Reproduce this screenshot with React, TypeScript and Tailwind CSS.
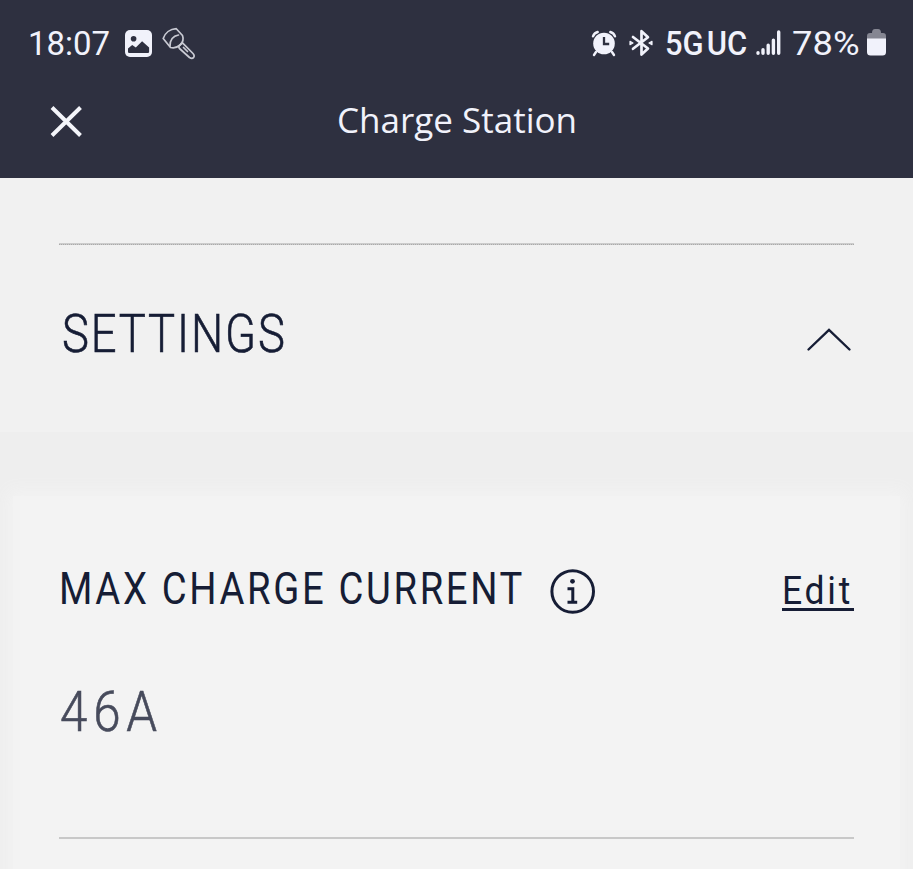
const sans = "font-['Roboto','Liberation_Sans',sans-serif]";

function StatusBar() {
  return (
    <div className={`flex h-[86px] items-start pl-[28px] pt-[26px] text-[#f1f2fb] ${sans}`}>
      <div className="w-[97px] whitespace-nowrap text-[34px] leading-[34px]">
        <span className="inline-block origin-left scale-x-[0.97]">18:07</span>
      </div>
      <svg width="27" height="27" viewBox="0 0 27 27" className="mt-[4px]">
        <rect width="27" height="27" rx="5" fill="#f1f2fb" />
        <circle cx="8.6" cy="8.7" r="2.8" fill="#2e3040" />
        <path d="M3 22v-3.4l4.2-3.7 3.6 2.7 6.3-6.3 7 6.2V22q0 1-1.2 1H4.2Q3 23 3 22Z" fill="#2e3040" />
      </svg>
      <svg width="34" height="34" viewBox="0 0 34 34" className="ml-[10px] mt-[1px]" fill="none" stroke="#c9cad3" strokeWidth="1.7" strokeLinejoin="round" strokeLinecap="round">
        <path d="M1.200 11.500C3 6 8 2 14.300 1.700L20.500 8.500Q22.500 14 18 18T8.500 20.500Z" />
        <path d="M8 19C8 13 11 9 16.500 8" />
        <path d="M17.500 18.500 20.500 15.800 31 26.500Q33 29 31.500 30.600T27.500 30.500L17.500 21.500Q16.200 19.800 17.500 18.500Z" />
        <path d="M21.500 20.500l4 4" />
      </svg>
      <div className="ml-[395px] flex">
        <svg width="26" height="27" viewBox="0 0 26 27" className="mt-[4px]">
          <circle cx="13" cy="13.5" r="10.800" fill="#f1f2fb" />
          <path d="M2 6.3Q3.2 3 6.7 2M24 6.3Q22.8 3 19.3 2M5 22l-2 3M21 22l2 3" stroke="#f1f2fb" strokeWidth="2.4" strokeLinecap="round" fill="none" />
          <path d="M13 7v7h5.2" stroke="#2e3040" strokeWidth="2.3" fill="none" />
        </svg>
        <svg width="24" height="28" viewBox="0 0 24 28" className="ml-[12px] mt-[3px]" fill="none" stroke="#f1f2fb" strokeWidth="2.7" strokeLinecap="round" strokeLinejoin="round">
          <path d="M4 8 19 19.500l-6.500 6V2.200L19 8.200 4 19.800" />
          <path d="M1 12.400 4 14l-3 1.600zM23 12.400 20 14l3 1.600z" fill="#f1f2fb" strokeWidth="1.200" />
        </svg>
        <div className="ml-[12px] w-[91px] whitespace-nowrap text-[34px] font-medium leading-[34px]">
          <span className="inline-block origin-left scale-x-[0.91] [word-spacing:-5px]">5G UC</span>
        </div>
        <svg width="25" height="26" viewBox="0 0 25 26" className="mt-[4px]" fill="none" stroke="#f1f2fb" strokeWidth="3.400" strokeLinecap="round">
          <path d="M2 23.300v-.6M7 23.300v-3.500M12.200 23.300v-8M17.400 23.300v-13M22.700 23.300V2" />
        </svg>
        <div className="ml-[11px] w-[75px] whitespace-nowrap text-[34px] leading-[34px]">
          <span className="inline-block origin-left scale-x-[1.07]">78%</span>
        </div>
        <svg width="19" height="27" viewBox="0 0 19 27" className="mt-[3px]">
          <path d="M0 10V7q0-3 3-3h2q0-4 3-4h3q3 0 3 4h2q3 0 3 3v3Z" fill="#858692" />
          <path d="M0 9.500h19V23q0 3.500-3.500 3.500h-12Q0 26.500 0 23Z" fill="#f1f2fb" />
        </svg>
      </div>
    </div>
  );
}

function TitleBar() {
  return (
    <div className="flex h-[92px] items-start pl-[50px] text-[#f1f2fb]">
      <svg width="33" height="33" viewBox="0 0 33 33" className="mt-[19px]" stroke="#f4f5fa" strokeWidth="4">
        <path d="m2 2.500 28.500 28M30.500 2.500 2 30.500" />
      </svg>
      <h1 className="ml-[254px] mt-[16px] w-[245px] whitespace-nowrap font-['Open_Sans',sans-serif] text-[34px] font-normal leading-[36px]">
        <span className="inline-block origin-left scale-x-[1.03]">Charge Station</span>
      </h1>
    </div>
  );
}

export default function App() {
  return (
    <div className={`h-[869px] w-full overflow-hidden bg-[#f1f1f1] text-[#161d35] ${sans}`}>
      <header className="h-[178px] bg-[#2e3040]">
        <StatusBar />
        <TitleBar />
      </header>
      <section className="h-[254px] px-[59px] pt-[65px]">
        <div className="h-[2px] w-[795px] border-b border-dotted border-[#aaaaaa] bg-[#cccccc]" />
        <div className="flex items-start justify-between pt-[62px]">
          <h2 className="ml-[3px] w-[230px] whitespace-nowrap text-[54px] font-light leading-[54px] [-webkit-text-stroke:0.6px_#161d35]">
            <span className="inline-block origin-left scale-x-[0.84] tracking-[2.2px]">SETTINGS</span>
          </h2>
          <svg width="46" height="24" viewBox="0 0 46 24" className="mr-[2px] mt-[21px]" fill="none" stroke="#161d35" strokeWidth="2.4" strokeLinecap="round">
            <path d="m2.500 21.500 20.500-19.500 20.500 19.500" />
          </svg>
        </div>
      </section>
      <section className="h-[437px] bg-[#eeeeee] px-[13px] pt-[64px]">
        <div className="h-[500px] bg-[#f3f3f3] px-[46px] pt-[70px] shadow-[0_0_16px_5px_#f3f3f3]">
          <div className="flex h-[60px] items-start">
            <h3 className="w-[491px] whitespace-nowrap text-[45px] leading-[45px]">
              <span className="inline-block origin-left scale-x-[0.85] tracking-[3.1px]">MAX CHARGE CURRENT</span>
            </h3>
            <svg width="46" height="46" viewBox="0 0 46 46" className="mt-[3px]" fill="none" stroke="#161d35">
              <circle cx="22.700" cy="22.500" r="20.800" strokeWidth="3" />
              <circle cx="22.500" cy="12.300" r="2.400" fill="#161d35" stroke="none" />
              <path d="M17.500 19.700h5.300v14M17.500 33.200h9.700" strokeWidth="3" />
            </svg>
            <button className="ml-auto mt-[6px] h-[39px] w-[72px] whitespace-nowrap border-b-[3px] border-[#161d35] text-left text-[39px] leading-[39px]">
              <span className="inline-block origin-left scale-x-[0.91] tracking-[3px]">Edit</span>
            </button>
          </div>
          <p className="ml-[1px] mt-[58px] w-[110px] whitespace-nowrap text-[56px] font-light leading-[56px] text-[#474b5c] [-webkit-text-stroke:0.6px_#474b5c]">
            <span className="inline-block origin-left scale-x-[0.88] tracking-[6.6px]">46A</span>
          </p>
          <div className="mt-[97px] h-[2px] w-[795px] bg-[#c8c8c8]" />
        </div>
      </section>
    </div>
  );
}
